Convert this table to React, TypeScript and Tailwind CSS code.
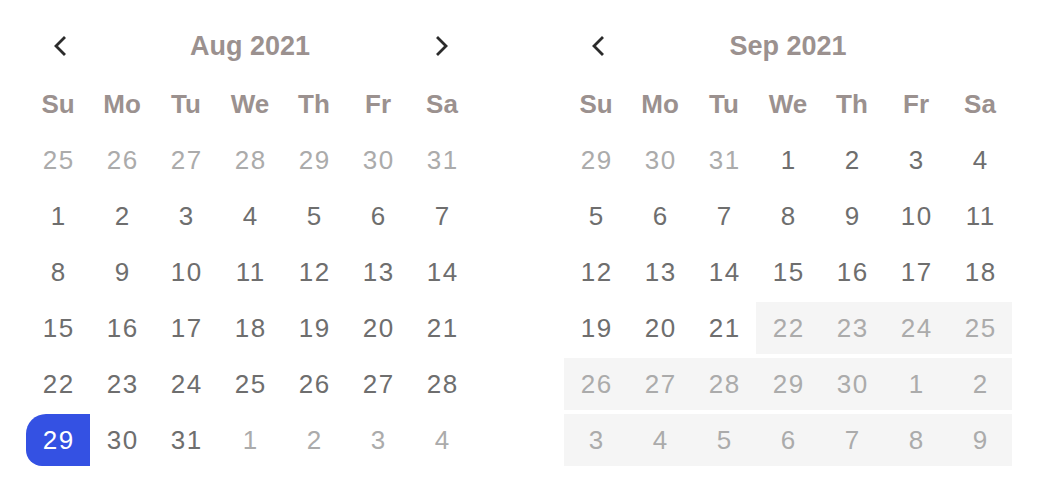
import React from "react";

type Day = { n: number; kind: "out" | "in" | "off" | "sel" };

const WEEK = ["Su", "Mo", "Tu", "We", "Th", "Fr", "Sa"];

function range(a: number, b: number, kind: Day["kind"]): Day[] {
  const out: Day[] = [];
  for (let i = a; i <= b; i++) out.push({ n: i, kind });
  return out;
}

const AUG: Day[] = [
  ...range(25, 31, "out"),
  ...range(1, 28, "in"),
  { n: 29, kind: "sel" },
  ...range(30, 31, "in"),
  ...range(1, 4, "out"),
];

const SEP: Day[] = [
  ...range(29, 31, "out"),
  ...range(1, 21, "in"),
  ...range(22, 30, "off"),
  ...range(1, 9, "off"),
];

function Chevron({ dir }: { dir: "left" | "right" }) {
  return (
    <svg width="14" height="22" viewBox="0 0 14 22" fill="none">
      <polyline
        points={dir === "left" ? "11,3 3,11 11,19" : "3,3 11,11 3,19"}
        stroke="#2b2b2b"
        strokeWidth="2.8"
        strokeLinecap="square"
      />
    </svg>
  );
}

function Cell({ d }: { d: Day }) {
  const cls = {
    out: "text-[#ababab]",
    in: "text-[#6e6e6e]",
    off: "text-[#ababab] bg-[#f5f5f5]",
    sel: "text-white bg-[#3451e3] rounded-tl-[20px] rounded-bl-[16px]",
  }[d.kind];
  return (
    <div className={`h-[52px] flex items-center justify-center pl-[1.5px] tracking-[1.5px] ${cls}`}>
      {d.n}
    </div>
  );
}

function Month({ title, days, next }: { title: string; days: Day[]; next?: boolean }) {
  return (
    <div className="w-[448px]">
      <div className="h-[52px] flex items-center">
        <button className="w-[64px] flex justify-center pl-[4px]">
          <Chevron dir="left" />
        </button>
        <div className="flex-1 text-center text-[27px] font-bold text-[#9b918f]">{title}</div>
        <div className="w-[64px] flex justify-center">{next && <Chevron dir="right" />}</div>
      </div>
      <div className="mt-[6px] grid grid-cols-7 gap-y-[4px] text-[26px]">
        {WEEK.map((w) => (
          <div key={w} className="h-[52px] flex items-center justify-center font-bold text-[#9b918f]">
            {w}
          </div>
        ))}
        {days.map((d, i) => (
          <Cell key={i} d={d} />
        ))}
      </div>
    </div>
  );
}

export default function App() {
  return (
    <div className="w-[1038px] h-[490px] bg-white pl-[26px] pt-[20px] flex gap-[90px] font-['Liberation_Sans',Arial,sans-serif]">
      <Month title="Aug 2021" days={AUG} next />
      <Month title="Sep 2021" days={SEP} />
    </div>
  );
}
